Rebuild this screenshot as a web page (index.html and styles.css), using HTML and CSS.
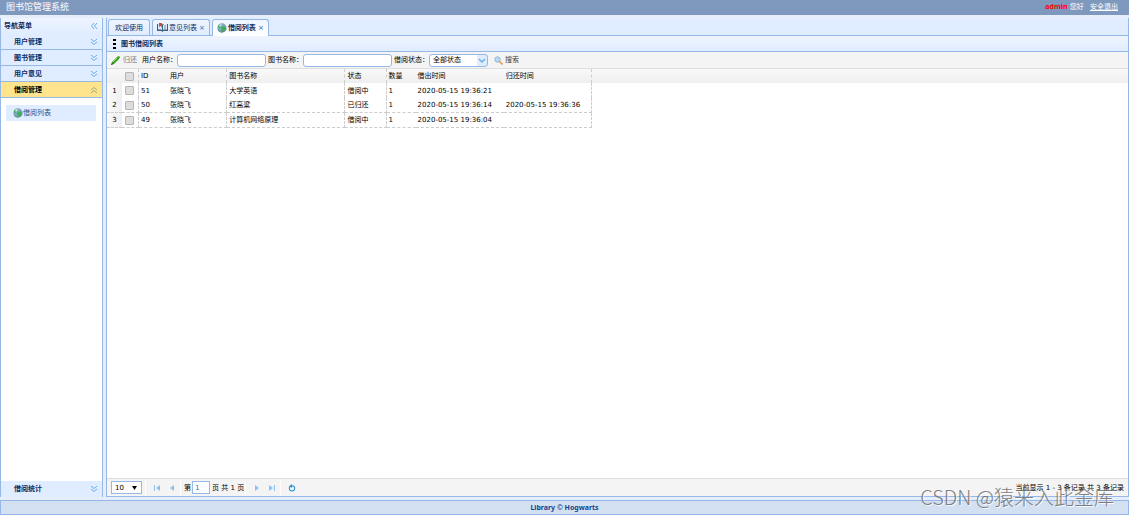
FILE: index.html
```html
<!DOCTYPE html>
<html lang="zh-CN">
<head>
<meta charset="utf-8">
<title>图书馆管理系统</title>
<link rel="stylesheet" href="styles.css">
</head>
<body>
<svg class="defs" aria-hidden="true">
  <symbol id="down" viewBox="0 0 8 8"><path d="M1 1l3 2.500L7 1M1 4l3 2.500L7 4" fill="none" stroke="#67b0ea"/></symbol>
  <symbol id="up" viewBox="0 0 8 8"><path d="M1 4l3-2.500L7 4M1 7l3-2.500L7 7" fill="none" stroke="#9aa98d"/></symbol>
  <symbol id="left" viewBox="0 0 8 8"><path d="M4 1L1.500 4 4 7M7 1L4.500 4 7 7" fill="none" stroke="#67b0ea"/></symbol>
  <symbol id="globe" viewBox="0 0 10 10"><circle cx="5" cy="5" r="4.700" fill="#7fa9c4"/><path d="M1 4Q1 1 4 1L5 2 4 4 2 5zM4 5l2-2 3 1 0 3-3 2-2-2z" fill="#3fb158"/><path d="M2 2l2-1 1 1-2 2z" fill="#cfe3ee"/><path d="M1 7q3 4 7 0" stroke="#5c8b72" fill="none"/></symbol>
</svg>
<header class="top">
  <h1>图书馆管理系统</h1>
  <div class="account"><b>admin</b> 您好 <a href="#">安全退出</a></div>
</header>
<main class="work">
  <nav class="side">
    <div class="side-title">导航菜单<button class="arrow" aria-label="折叠"><svg><use href="#left"/></svg></button></div>
    <button class="fold">用户管理<svg><use href="#down"/></svg></button>
    <button class="fold">图书管理<svg><use href="#down"/></svg></button>
    <button class="fold">用户意见<svg><use href="#down"/></svg></button>
    <button class="fold open">借阅管理<svg><use href="#up"/></svg></button>
    <div class="links"><a href="#"><svg class="globe"><use href="#globe"/></svg>借阅列表</a></div>
    <button class="fold last">借阅统计<svg><use href="#down"/></svg></button>
  </nav>
  <section class="content">
    <div class="tabs">
      <button class="tab">欢迎使用</button>
      <button class="tab"><svg class="book" viewBox="0 0 11 9"><path d="M0 1h5l.5.500L6 1h5v7H6.500l-1 1-1-1H0z" fill="#35607f"/><path d="M1 1h3l1 1v5L4 6.500H1z" fill="#d8e6f3"/><path d="M10 1H7L6 2v5l1-.5h3z" fill="#e3edf6"/><path d="M2 0h3v4L3.500 3 2 4z" fill="#d5453c"/><path d="M7 3h2M7 5h2" stroke="#6d8cab"/></svg>意见列表<span class="close">×</span></button>
      <button class="tab active"><svg class="globe"><use href="#globe"/></svg>借阅列表<span class="close">×</span></button>
    </div>
    <h2 class="panel-title"><svg class="dots" viewBox="0 0 3 10"><path d="M0 0h3v2H0zM0 4h3v2H0zM0 8h3v2H0z"/></svg>图书借阅列表</h2>
    <form class="toolbar">
      <button type="button" class="tool muted"><svg class="pen" viewBox="0 0 9 9"><path d="M0 9l1-3 5-5 2-1 1 1-1 2-5 5z" fill="#38a01c"/><path d="M2 6l4-4" stroke="#96dc6b"/><path d="M0 9l1-2 1 1z" fill="#333"/></svg>归还</button>
      <label for="user">用户名称：</label><input id="user" class="field" type="text">
      <label for="book">图书名称：</label><input id="book" class="field" type="text">
      <label for="state">借阅状态：</label><span class="combo"><select id="state"><option>全部状态</option></select><svg viewBox="0 0 10 10"><path d="M2 4l3 3 3-3" fill="none" stroke="#67b0ea" stroke-width="1.500"/></svg></span>
      <button type="button" class="tool find"><svg class="pen" viewBox="0 0 9 9"><path d="M5 5l3.500 3.500" stroke="#e9964a" stroke-width="1.600"/><circle cx="3.500" cy="3.500" r="2.700" fill="#bcd9f1" stroke="#8fb4d8"/></svg>搜索</button>
    </form>
    <div class="grid">
      <table>
        <colgroup><col class="c-num"><col class="c-check"><col class="c-id"><col class="c-user"><col class="c-book"><col class="c-state"><col class="c-count"><col class="c-date"><col class="c-date"></colgroup>
        <thead><tr><th></th><th class="line"><input type="checkbox" aria-label="全选"></th><th>ID</th><th class="line">用户</th><th class="line">图书名称</th><th class="line">状态</th><th>数量</th><th>借出时间</th><th class="line">归还时间</th></tr></thead>
        <tbody>
          <tr><td class="num">1</td><td class="line"><input type="checkbox" aria-label="选择51"></td><td>51</td><td class="line">张晓飞</td><td class="line">大学英语</td><td class="line">借阅中</td><td>1</td><td>2020-05-15 19:36:21</td><td class="line"></td></tr>
          <tr class="under"><td class="num">2</td><td class="line"><input type="checkbox" aria-label="选择50"></td><td>50</td><td class="line">张晓飞</td><td class="line">红高粱</td><td class="line">已归还</td><td>1</td><td>2020-05-15 19:36:14</td><td class="line">2020-05-15 19:36:36</td></tr>
          <tr class="under"><td class="num">3</td><td class="line"><input type="checkbox" aria-label="选择49"></td><td>49</td><td class="line">张晓飞</td><td class="line">计算机网络原理</td><td class="line">借阅中</td><td>1</td><td>2020-05-15 19:36:04</td><td class="line"></td></tr>
        </tbody>
      </table>
    </div>
    <div class="pager">
      <span class="combo size"><select aria-label="每页条数"><option>10</option></select><svg viewBox="0 0 10 10"><path d="M1 3h5L3.500 7z"/></svg></span>
      <i class="sep"></i>
      <button class="go" aria-label="首页"><svg viewBox="0 0 8 8"><path d="M1 1h1v6H1zM7 1v6L3 4z" fill="#8cc1ef"/></svg></button>
      <button class="go" aria-label="上一页"><svg viewBox="0 0 8 8"><path d="M6 1v6L2 4z" fill="#8cc1ef"/></svg></button>
      <i class="sep"></i>
      <label class="page">第<input type="text" value="1"></label><span>页 共 1 页</span>
      <i class="sep"></i>
      <button class="go" aria-label="下一页"><svg viewBox="0 0 8 8"><path d="M2 1v6l4-3z" fill="#8cc1ef"/></svg></button>
      <button class="go" aria-label="末页"><svg viewBox="0 0 8 8"><path d="M6 1h1v6H6zM1 1v6l4-3z" fill="#8cc1ef"/></svg></button>
      <i class="sep"></i>
      <button class="go" aria-label="刷新"><svg viewBox="0 0 8 8"><path d="M2.500 2A2.700 2.700 0 1 0 5.500 2H3" fill="none" stroke="#1e8fd5" stroke-width="1.100"/><path d="M4 0v4L1.500 2z" fill="#1e8fd5"/></svg></button>
      <span class="total">当前显示 1 - 3 条记录 共 3 条记录</span>
    </div>
  </section>
</main>
<footer class="foot">Library © Hogwarts</footer>
<div class="watermark">CSDN @猿来入此金库</div>
</body>
</html>
```
FILE: styles.css
```css
* { box-sizing: border-box; }
body {
  margin: 0;
  height: 100vh;
  padding-bottom: 2px;
  display: flex;
  flex-direction: column;
  background: #fff;
  color: #000;
  font: 7px/10px "DejaVu Sans", "Noto Sans CJK SC", sans-serif;
  white-space: nowrap;
}
button, input, select { font: inherit; color: inherit; margin: 0; padding: 0; }
button { border: 0; background: none; }
svg { width: 8px; height: 8px; flex: none; }
.defs { position: absolute; width: 0; height: 0; }

.top {
  height: 15px;
  flex: none;
  display: flex;
  align-items: center;
  justify-content: space-between;
  padding: 0 11px 2px 6px;
  background: #7f99be;
  color: #fff;
}
.top h1 { margin: 0; font-size: 9px; line-height: 12px; font-weight: 400; }
.account b { color: #f00; font-family: "Open Sans", sans-serif; }
.account a { color: #fff; margin-left: 4px; }

.work {
  flex: 1;
  min-height: 0;
  display: flex;
  gap: 3px;
  padding: 3px 0;
  background: #e6eefc;
}
.side {
  width: 103px;
  flex: none;
  display: flex;
  flex-direction: column;
  border: 1px solid #95b8e7;
  border-top: 0;
  border-bottom: 0;
  background: #fff;
}
.side-title, .fold {
  height: 16px;
  flex: none;
  display: flex;
  align-items: center;
  justify-content: space-between;
  padding: 0 4px 0 13px;
  background: #e0ecff;
  color: #0e2d5f;
  font-weight: 700;
  border-bottom: 1px solid #95b8e7;
}
.side-title { padding-left: 3px; border: 0; background: linear-gradient(#eff5ff, #e0ecff); }
.arrow { display: flex; }
.open { background: #ffe48d; color: #000; }
.last { border: 0; }
.links { flex: 1; padding: 7px 6px 0 5px; }
.links a {
  height: 16px;
  display: flex;
  align-items: center;
  padding-left: 7px;
  background: #e0ecff;
  color: #2f5288;
  text-decoration: none;
}
.globe { width: 10px; height: 10px; }

.content {
  flex: 1;
  min-width: 0;
  display: flex;
  flex-direction: column;
  border: 1px solid #95b8e7;
  border-top: 0;
  background: #fff;
}
.tabs {
  height: 18px;
  flex: none;
  display: flex;
  align-items: flex-end;
  gap: 2px;
  padding-left: 1px;
  background: #e0ecff;
  border-bottom: 1px solid #95b8e7;
}
.tab {
  height: 16px;
  display: flex;
  align-items: center;
  gap: 1px;
  padding: 0 6px;
  border: 1px solid #95b8e7;
  border-bottom: 0;
  border-radius: 3px 3px 0 0;
  background: linear-gradient(#eff5ff, #e0ecff);
  color: #0e2d5f;
}
.tab:not(:first-child) { padding: 0 4px; }
.tab.active { height: 17px; margin-bottom: -1px; background: linear-gradient(#eff5ff, #fff); font-weight: 700; }
.book { width: 11px; height: 9px; }
.close { color: #5f8fc4; margin-left: 1px; font-weight: 700; }
.panel-title {
  height: 16px;
  flex: none;
  display: flex;
  align-items: center;
  gap: 5px;
  margin: 0;
  padding-left: 6px;
  font-size: 7px;
  color: #0e2d5f;
  background: linear-gradient(#eff5ff, #e0ecff);
  border-bottom: 1px solid #95b8e7;
}
.dots { width: 3px; height: 10px; }
.toolbar {
  height: 17px;
  flex: none;
  display: flex;
  align-items: center;
  padding-left: 4px;
  background: #f4f4f4;
  border-bottom: 1px solid #ddd;
}
.tool { display: flex; align-items: center; gap: 3px; color: #444; }
.muted { color: #777; margin-right: 5px; }
.find { margin-left: 6px; gap: 2px; }
.pen { width: 9px; height: 9px; }
.field {
  width: 89px;
  height: 13px;
  margin-right: 2px;
  padding: 0 3px;
  border: 1px solid #95b8e7;
  border-radius: 3px;
  background: #fff;
}
.combo {
  width: 59px;
  height: 13px;
  display: flex;
  align-items: center;
  border: 1px solid #95b8e7;
  border-radius: 3px;
  background: linear-gradient(90deg, #fff 47px, #e0ecff 47px);
  overflow: hidden;
}
.combo select { flex: 1; min-width: 0; padding-left: 3px; border: 0; appearance: none; background: none; }
.combo svg { width: 10px; height: 10px; }

.grid { flex: 1; min-height: 0; background: linear-gradient(#f9f9f9, #efefef 14px, #fff 14px); }
table { table-layout: fixed; border-collapse: separate; border-spacing: 0; width: 485px; }
.c-num { width: 15px; }
.c-check { width: 17px; }
.c-id { width: 29px; }
.c-user { width: 59px; }
.c-book { width: 118px; }
.c-state { width: 41px; }
.c-count { width: 29px; }
.c-date { width: 88px; }
th, td { height: 15px; padding: 0 2px; text-align: left; font-weight: 400; }
th { height: 14px; }
.line { border-right: 1px dashed #ccc; }
.under td { border-bottom: 1px dashed #ccc; }
.num { background: linear-gradient(90deg, #fafafa, #efefef); text-align: center; }
table input {
  display: block;
  width: 9px;
  height: 9px;
  margin: 0 1px;
  appearance: none;
  border: 1px solid #b5b5b5;
  border-radius: 1px;
  background: #ddd;
}

.pager {
  height: 18px;
  flex: none;
  display: flex;
  align-items: center;
  padding: 0 4px;
  background: #f4f4f4;
  border-top: 1px solid #ddd;
}
.size { width: 31px; margin-right: 2px; border-radius: 0; background: #fff; }
.size select { padding-left: 3px; }
.sep { width: 1px; height: 14px; margin: 0 3px 0 1px; background: #fff; }
.go { width: 15px; height: 14px; display: flex; align-items: center; justify-content: center; }
.page { display: flex; align-items: center; }
.page input { width: 18px; height: 13px; margin: 0 2px 0 1px; padding: 0 2px; border: 1px solid #95b8e7; background: #fff; color: #0081c2; }
.total { margin-left: auto; }

.foot {
  height: 15px;
  flex: none;
  border: 1px solid #95b8e7;
  background: #d2e0f2;
  color: #15428b;
  font-family: "Noto Sans", sans-serif;
  font-weight: 700;
  line-height: 13px;
  text-align: center;
}
.watermark {
  position: absolute;
  right: 15px;
  bottom: 6px;
  color: #666;
  opacity: .8;
  font: 20px/28px "Noto Sans CJK SC", sans-serif;
  font-weight: 300;
  text-shadow: 1px 1px #fff;
  pointer-events: none;
}
```
